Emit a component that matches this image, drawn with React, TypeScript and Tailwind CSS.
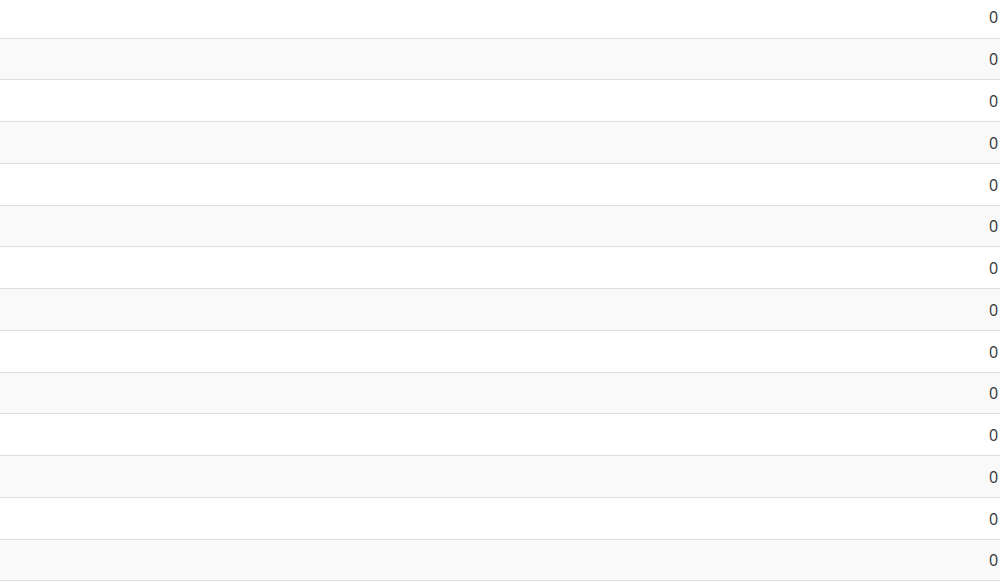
const rows = Array.from({ length: 14 }, (_, i) => ({ id: i, value: 0 }));

export default function App() {
  return (
    <div className="w-[1000px] h-[585px] overflow-hidden bg-white font-['Open_Sans','Liberation_Sans',sans-serif]">
      <table className="w-[1013px] -mt-[3.7px] border-collapse text-[16px] text-[#333]">
        <tbody>
          {rows.map((r) => (
            <tr key={r.id} className={`h-[41.75px] border-b border-[#dddddd] ${r.id % 2 === 1 ? 'bg-[#f9f9f9]' : 'bg-white'}`}>
              <td className="p-0"></td>
              <td className="w-[24px] p-0 pt-[1px] text-left align-middle">{r.value}</td>
            </tr>
          ))}
        </tbody>
      </table>
    </div>
  );
}
